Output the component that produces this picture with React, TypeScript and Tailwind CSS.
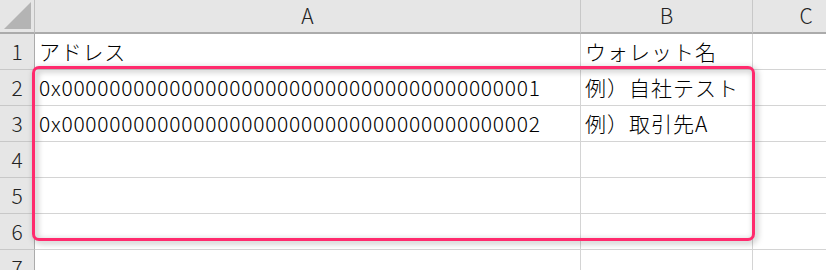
import React from "react";

const FONT = {
  fontFamily: '"Noto Sans CJK JP", "Noto Sans", sans-serif',
};

const rows: [string, string][] = [
  ["アドレス", "ウォレット名"],
  ["0x0000000000000000000000000000000000000001", "例）自社テスト"],
  ["0x0000000000000000000000000000000000000002", "例）取引先A"],
  ["", ""],
  ["", ""],
  ["", ""],
  ["", ""],
];

function CornerCell() {
  return (
    <div className="relative h-[34px] w-[35px] border-r border-b-2 border-r-[#bfbfbf] border-b-[#ababab] bg-[#e6e6e6]">
      <svg className="absolute left-0 top-0" width="34" height="32" viewBox="0 0 34 32">
        <polygon points="31,2 31,29 4,29" fill="#b4b4b4" />
      </svg>
    </div>
  );
}

function ColHeader({ label, className }: { label: string; className: string }) {
  return (
    <div
      className={`flex h-[34px] items-center justify-center border-r border-b-2 border-r-[#c8c8c8] border-b-[#ababab] bg-[#e6e6e6] text-[21px] font-light text-[#222] ${className}`}
    >
      {label}
    </div>
  );
}

export default function App() {
  return (
    <div className="relative h-[270px] w-[826px] overflow-hidden bg-white" style={FONT}>
      <div className="grid w-[860px] grid-cols-[35px_546px_172px_107px]">
        <CornerCell />
        <ColHeader label="A" className="" />
        <ColHeader label="B" className="" />
        <ColHeader label="C" className="" />

        {rows.map(([a, b], i) => (
          <React.Fragment key={i}>
            <div className="flex h-[36px] items-center justify-center border-r border-b border-r-[#ababab] border-b-[#c8c8c8] bg-[#e6e6e6] text-[21px] font-light text-[#222]">
              {i + 1}
            </div>
            <div className="flex h-[36px] items-center whitespace-nowrap border-r border-b border-[#d4d4d4] pl-[4px] text-[21px] font-light tracking-[0.75px] text-black">
              {a}
            </div>
            <div className="flex h-[36px] items-center whitespace-nowrap border-r border-b border-[#d4d4d4] pl-[4px] text-[21px] font-light tracking-[1px] text-black">
              {b}
            </div>
            <div className="h-[36px] border-r border-b border-[#d4d4d4]" />
          </React.Fragment>
        ))}
      </div>

      {/* highlight frame around the data rows */}
      <div className="pointer-events-none absolute left-[32px] top-[66px] h-[175px] w-[723px] rounded-[7px] border-[3.5px] border-[#ff2a6d] drop-shadow-[2px_2px_3px_rgba(0,0,0,0.35)]" />
    </div>
  );
}
